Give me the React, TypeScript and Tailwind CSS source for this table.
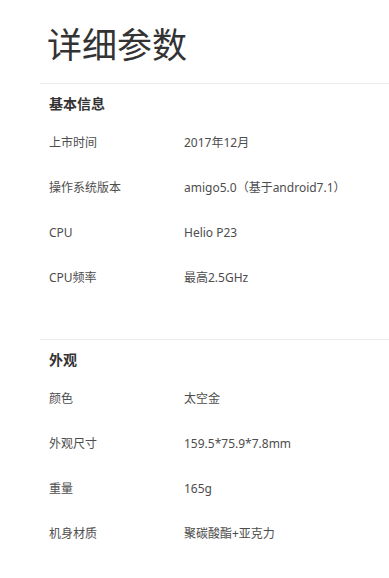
const sections = [
  {
    title: "基本信息",
    rows: [
      ["上市时间", "2017年12月"],
      ["操作系统版本", "amigo5.0（基于android7.1）"],
      ["CPU", "Helio P23"],
      ["CPU频率", "最高2.5GHz"],
    ],
  },
  {
    title: "外观",
    rows: [
      ["颜色", "太空金"],
      ["外观尺寸", "159.5*75.9*7.8mm"],
      ["重量", "165g"],
      ["机身材质", "聚碳酸酯+亚克力"],
    ],
  },
];

function Section({ title, rows }: { title: string; rows: string[][] }) {
  return (
    <div className="border-t border-[#ececec] pb-[39px]">
      <div className="h-[36px] pt-[12px] leading-[16px] pl-[9px] text-[14px] font-bold text-[#333]">{title}</div>
      <div>
        {rows.map(([k, v]) => (
          <div key={k} className="h-[45px] flex items-center text-[12px] text-[#4d4d4d]">
            <span className="w-[144px] pl-[9px] shrink-0">{k}</span>
            <span>{v}</span>
          </div>
        ))}
      </div>
    </div>
  );
}

export default function App() {
  return (
    <div
      className="bg-white w-[389px] h-[578px] overflow-hidden pl-[40px]"
      style={{ fontFamily: '"Noto Sans", "Noto Sans CJK SC", sans-serif' }}
    >
      <h1 className="h-[83px] flex items-center pl-[7px] pt-[6px] text-[35px] font-normal text-[#333] leading-none">
        详细参数
      </h1>
      {sections.map((s) => (
        <Section key={s.title} title={s.title} rows={s.rows} />
      ))}
    </div>
  );
}
